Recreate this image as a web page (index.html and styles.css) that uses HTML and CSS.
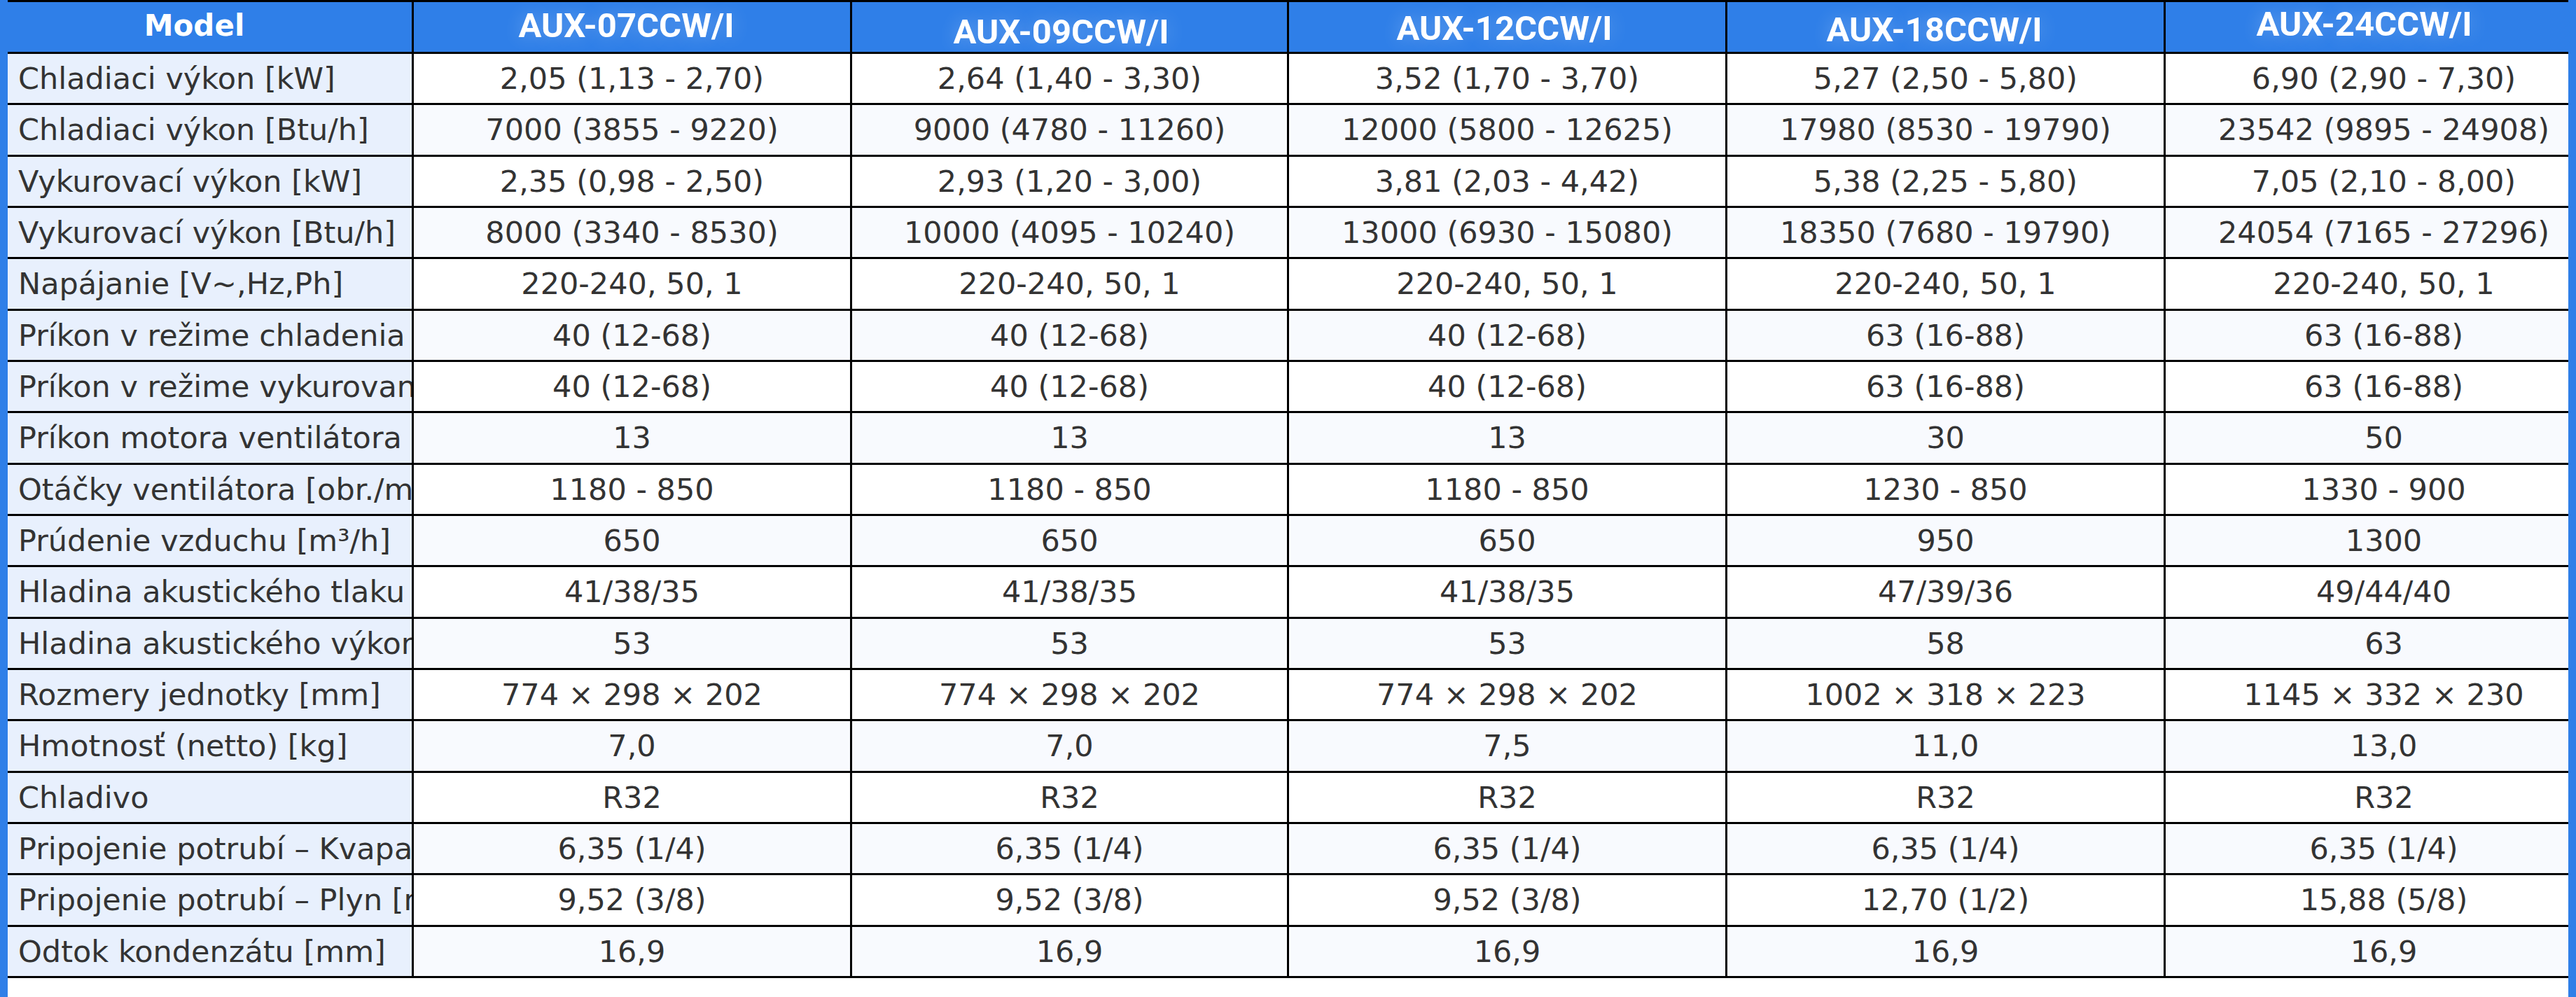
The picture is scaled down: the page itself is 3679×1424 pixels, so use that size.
FILE: index.html
```html
<!DOCTYPE html>
<html lang="sk">
<head>
<meta charset="utf-8">
<title>AUX – technické parametre</title>
<link rel="stylesheet" href="styles.css">
</head>
<body>
<div class="frame">
  <div class="specs" role="table">
    <div class="head-row" role="row">
      <div class="cell head head-label" role="columnheader">Model</div>
      <div class="cell head model m07" role="columnheader"><span>AUX-07CCW/I</span></div>
      <div class="cell head model m09" role="columnheader"><span>AUX-09CCW/I</span></div>
      <div class="cell head model m12" role="columnheader"><span>AUX-12CCW/I</span></div>
      <div class="cell head model m18" role="columnheader"><span>AUX-18CCW/I</span></div>
      <div class="cell head model m24" role="columnheader"><span>AUX-24CCW/I</span></div>
    </div>
    <div class="row" role="row">
      <div class="cell label">Chladiaci výkon [kW]</div>
      <div class="cell val">2,05 (1,13 - 2,70)</div>
      <div class="cell val">2,64 (1,40 - 3,30)</div>
      <div class="cell val">3,52 (1,70 - 3,70)</div>
      <div class="cell val">5,27 (2,50 - 5,80)</div>
      <div class="cell val">6,90 (2,90 - 7,30)</div>
    </div>
    <div class="row" role="row">
      <div class="cell label">Chladiaci výkon [Btu/h]</div>
      <div class="cell val">7000 (3855 - 9220)</div>
      <div class="cell val">9000 (4780 - 11260)</div>
      <div class="cell val">12000 (5800 - 12625)</div>
      <div class="cell val">17980 (8530 - 19790)</div>
      <div class="cell val">23542 (9895 - 24908)</div>
    </div>
    <div class="row" role="row">
      <div class="cell label">Vykurovací výkon [kW]</div>
      <div class="cell val">2,35 (0,98 - 2,50)</div>
      <div class="cell val">2,93 (1,20 - 3,00)</div>
      <div class="cell val">3,81 (2,03 - 4,42)</div>
      <div class="cell val">5,38 (2,25 - 5,80)</div>
      <div class="cell val">7,05 (2,10 - 8,00)</div>
    </div>
    <div class="row" role="row">
      <div class="cell label">Vykurovací výkon [Btu/h]</div>
      <div class="cell val">8000 (3340 - 8530)</div>
      <div class="cell val">10000 (4095 - 10240)</div>
      <div class="cell val">13000 (6930 - 15080)</div>
      <div class="cell val">18350 (7680 - 19790)</div>
      <div class="cell val">24054 (7165 - 27296)</div>
    </div>
    <div class="row" role="row">
      <div class="cell label">Napájanie [V~,Hz,Ph]</div>
      <div class="cell val">220-240, 50, 1</div>
      <div class="cell val">220-240, 50, 1</div>
      <div class="cell val">220-240, 50, 1</div>
      <div class="cell val">220-240, 50, 1</div>
      <div class="cell val">220-240, 50, 1</div>
    </div>
    <div class="row" role="row">
      <div class="cell label">Príkon v režime chladenia [W]</div>
      <div class="cell val">40 (12-68)</div>
      <div class="cell val">40 (12-68)</div>
      <div class="cell val">40 (12-68)</div>
      <div class="cell val">63 (16-88)</div>
      <div class="cell val">63 (16-88)</div>
    </div>
    <div class="row" role="row">
      <div class="cell label">Príkon v režime vykurovania [W]</div>
      <div class="cell val">40 (12-68)</div>
      <div class="cell val">40 (12-68)</div>
      <div class="cell val">40 (12-68)</div>
      <div class="cell val">63 (16-88)</div>
      <div class="cell val">63 (16-88)</div>
    </div>
    <div class="row" role="row">
      <div class="cell label">Príkon motora ventilátora [W]</div>
      <div class="cell val">13</div>
      <div class="cell val">13</div>
      <div class="cell val">13</div>
      <div class="cell val">30</div>
      <div class="cell val">50</div>
    </div>
    <div class="row" role="row">
      <div class="cell label">Otáčky ventilátora [obr./min]</div>
      <div class="cell val">1180 - 850</div>
      <div class="cell val">1180 - 850</div>
      <div class="cell val">1180 - 850</div>
      <div class="cell val">1230 - 850</div>
      <div class="cell val">1330 - 900</div>
    </div>
    <div class="row" role="row">
      <div class="cell label">Prúdenie vzduchu [m³/h]</div>
      <div class="cell val">650</div>
      <div class="cell val">650</div>
      <div class="cell val">650</div>
      <div class="cell val">950</div>
      <div class="cell val">1300</div>
    </div>
    <div class="row" role="row">
      <div class="cell label">Hladina akustického tlaku [dB(A)]</div>
      <div class="cell val">41/38/35</div>
      <div class="cell val">41/38/35</div>
      <div class="cell val">41/38/35</div>
      <div class="cell val">47/39/36</div>
      <div class="cell val">49/44/40</div>
    </div>
    <div class="row" role="row">
      <div class="cell label">Hladina akustického výkonu [dB(A)]</div>
      <div class="cell val">53</div>
      <div class="cell val">53</div>
      <div class="cell val">53</div>
      <div class="cell val">58</div>
      <div class="cell val">63</div>
    </div>
    <div class="row" role="row">
      <div class="cell label">Rozmery jednotky [mm]</div>
      <div class="cell val">774 × 298 × 202</div>
      <div class="cell val">774 × 298 × 202</div>
      <div class="cell val">774 × 298 × 202</div>
      <div class="cell val">1002 × 318 × 223</div>
      <div class="cell val">1145 × 332 × 230</div>
    </div>
    <div class="row" role="row">
      <div class="cell label">Hmotnosť (netto) [kg]</div>
      <div class="cell val">7,0</div>
      <div class="cell val">7,0</div>
      <div class="cell val">7,5</div>
      <div class="cell val">11,0</div>
      <div class="cell val">13,0</div>
    </div>
    <div class="row" role="row">
      <div class="cell label">Chladivo</div>
      <div class="cell val">R32</div>
      <div class="cell val">R32</div>
      <div class="cell val">R32</div>
      <div class="cell val">R32</div>
      <div class="cell val">R32</div>
    </div>
    <div class="row" role="row">
      <div class="cell label">Pripojenie potrubí – Kvapalina [mm]</div>
      <div class="cell val">6,35 (1/4)</div>
      <div class="cell val">6,35 (1/4)</div>
      <div class="cell val">6,35 (1/4)</div>
      <div class="cell val">6,35 (1/4)</div>
      <div class="cell val">6,35 (1/4)</div>
    </div>
    <div class="row" role="row">
      <div class="cell label">Pripojenie potrubí – Plyn [mm]</div>
      <div class="cell val">9,52 (3/8)</div>
      <div class="cell val">9,52 (3/8)</div>
      <div class="cell val">9,52 (3/8)</div>
      <div class="cell val">12,70 (1/2)</div>
      <div class="cell val">15,88 (5/8)</div>
    </div>
    <div class="row" role="row">
      <div class="cell label">Odtok kondenzátu [mm]</div>
      <div class="cell val">16,9</div>
      <div class="cell val">16,9</div>
      <div class="cell val">16,9</div>
      <div class="cell val">16,9</div>
      <div class="cell val">16,9</div>
    </div>
  </div>
</div>
</body>
</html>
```
FILE: styles.css
```css
html, body {
  margin: 0;
  padding: 0;
}

body {
  width: 3679px;
  height: 1424px;
  overflow: hidden;
  background: #ffffff;
  font-family: "DejaVu Sans", "Noto Sans", sans-serif;
}

.frame {
  box-sizing: border-box;
  width: 3679px;
  height: 1424px;
  border-left: 11px solid #2f7fe8;
  border-right: 11px solid #2f7fe8;
  background: #ffffff;
  overflow: hidden;
}

.specs {
  display: grid;
  grid-template-columns: 580px 626px 624px 626px 626px 626px;
  grid-template-rows: 74px;
  grid-auto-rows: 73.333px;
  width: max-content;
  border-top: 3px solid #000000;
}

.head-row,
.row {
  display: contents;
}

.cell {
  box-sizing: border-box;
  display: flex;
  align-items: center;
  justify-content: center;
  border-right: 3px solid #000000;
  border-bottom: 3px solid #000000;
  font-size: 43px;
  color: #333333;
  white-space: nowrap;
  overflow: hidden;
}

.label {
  justify-content: flex-start;
  padding-left: 15px;
  background: #e8f0fd;
}

.val {
  background: #ffffff;
}

.row:nth-child(odd) .val {
  background: #f8fafe;
}

.head {
  align-items: flex-start;
  background: #2f7fe8;
  color: #ffffff;
  line-height: 1;
}

.head-label {
  font-weight: bold;
  font-size: 42px;
  padding-top: 13px;
  padding-right: 44px;
}

.model {
  font-family: Roboto, "Liberation Sans", sans-serif;
  font-weight: 700;
  font-size: 49px;
}

.model span {
  text-shadow: 0 0 26px rgba(255, 255, 255, 0.28);
}

.m07 { padding-top: 9px;  padding-right: 16px; }
.m09 { padding-top: 18px; padding-right: 24px; }
.m12 { padding-top: 13px; padding-right: 8px; }
.m18 { padding-top: 15px; padding-right: 32px; }
.m24 { padding-top: 7px;  padding-right: 56px; }
```
